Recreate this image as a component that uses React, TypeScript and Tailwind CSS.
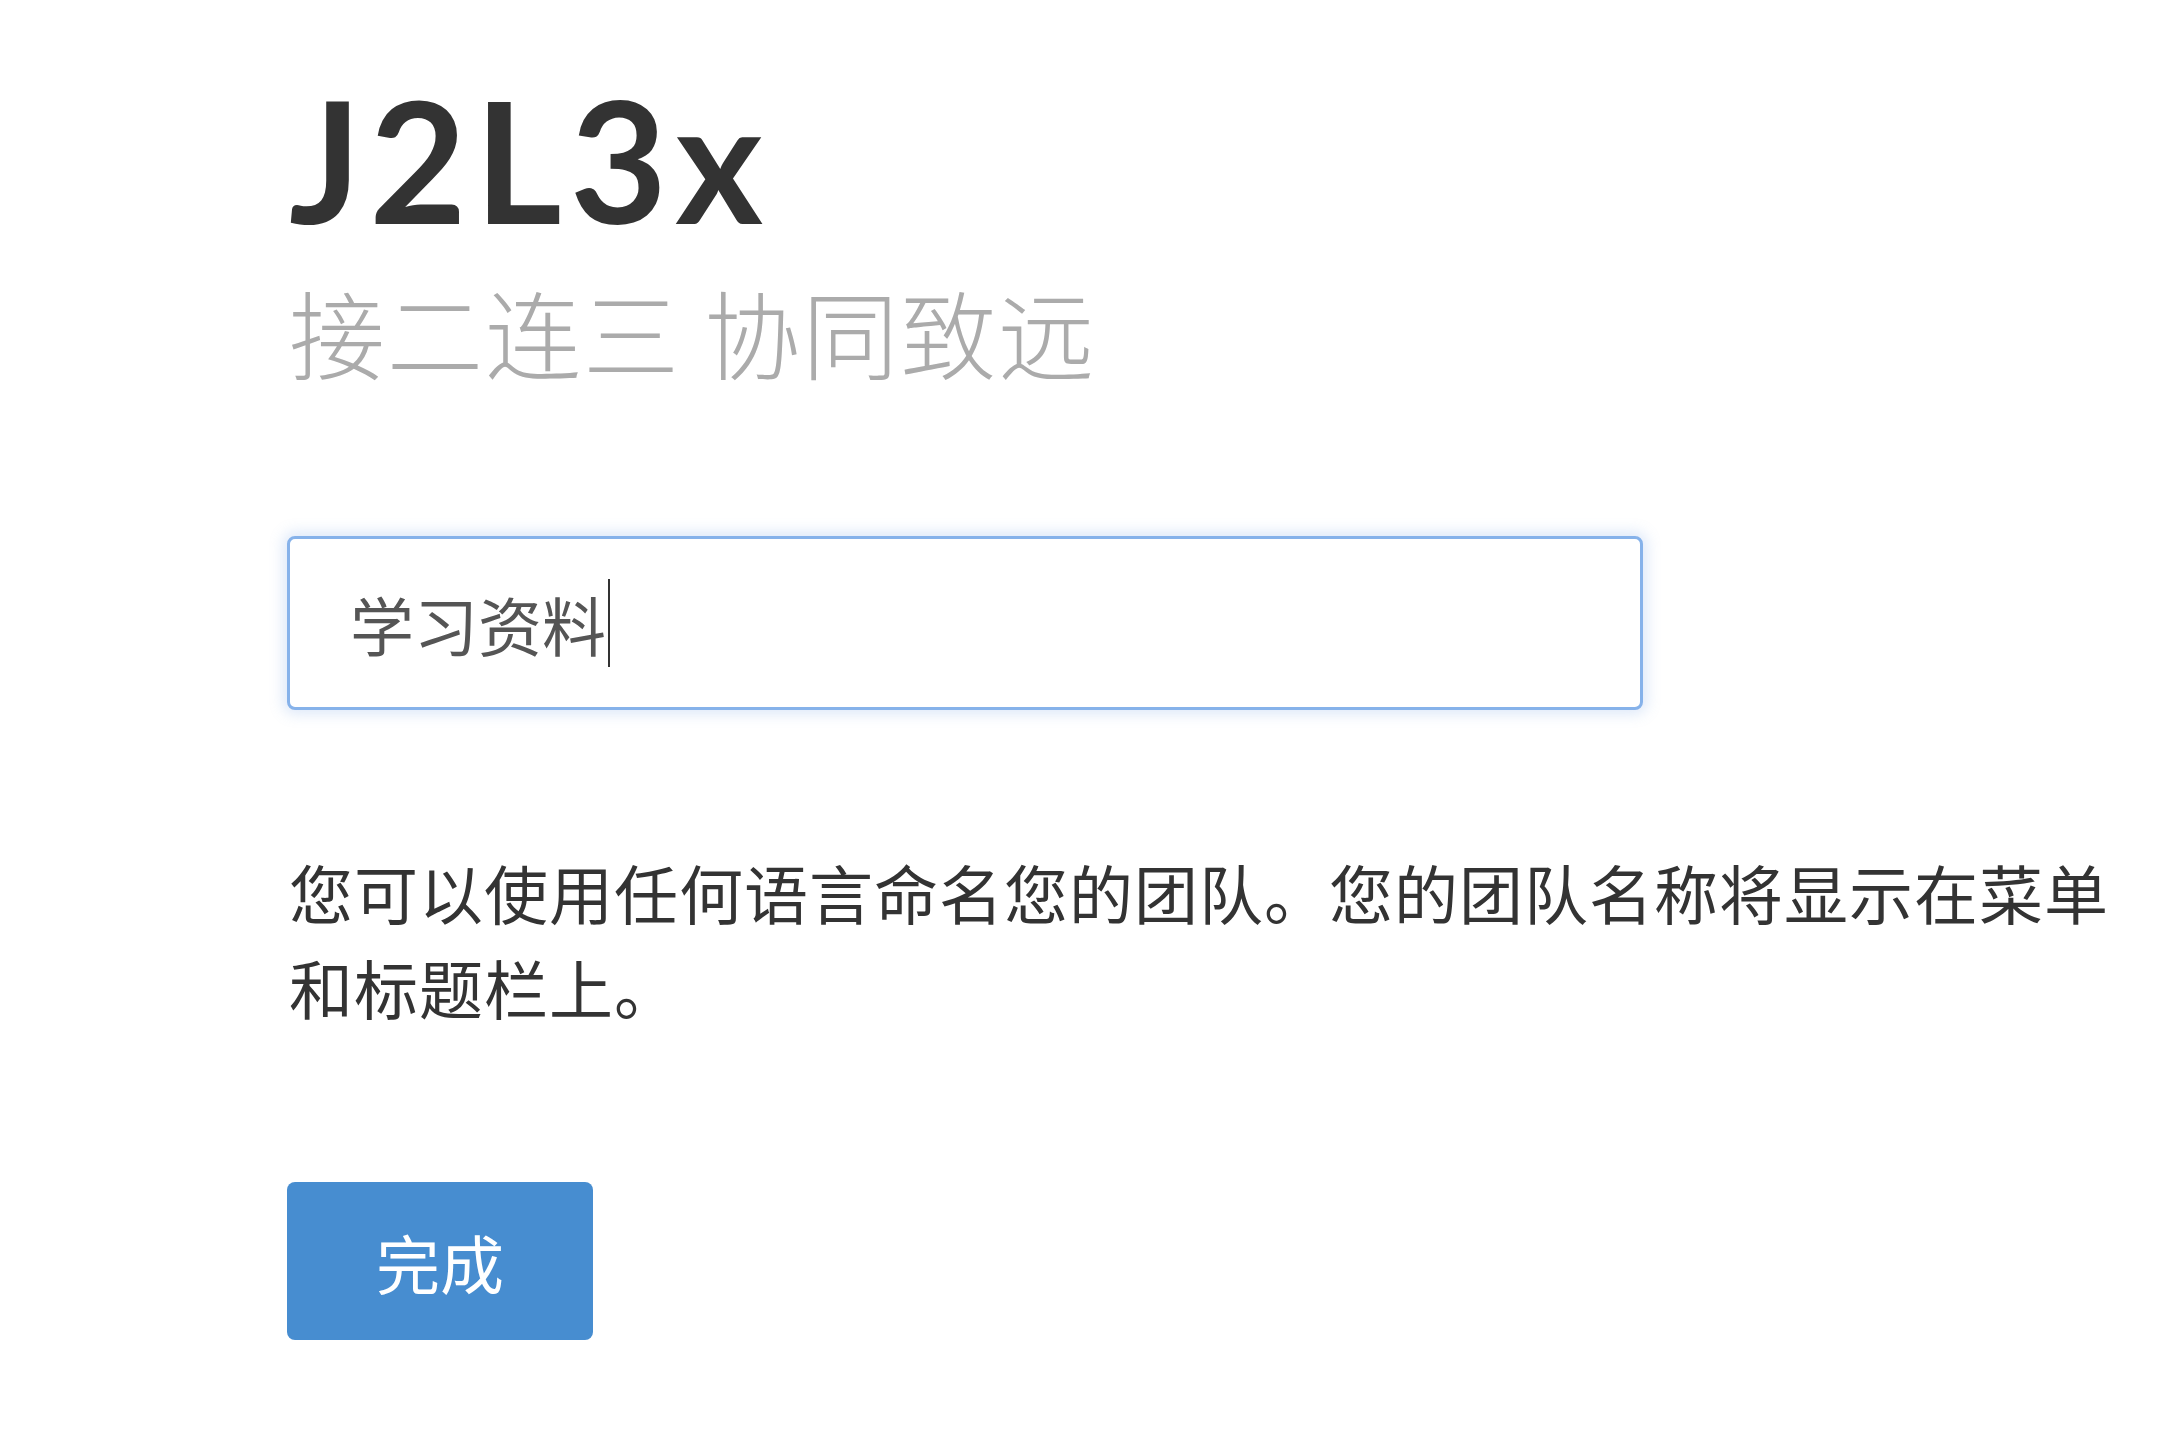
export default function App() {
  return (
    <div className="min-h-screen bg-white">
      <div className="flex flex-col pl-[287px] pr-[20px] w-[2161px]">
        {/* brand */}
        <h1 className="mt-[75px] ml-[2px] text-[168px] leading-none font-bold text-[#333333] tracking-[8px] [font-family:Lato,'Open_Sans',sans-serif]">
          J2L3x
        </h1>
        <p className="mt-[40px] ml-[2px] text-[96px] leading-none font-light text-[#ababab] tracking-[2px] [font-family:'Noto_Sans_CJK_SC',sans-serif]">
          接二连三 协同致远
        </p>

        {/* team name field */}
        <div className="mt-[157px] w-[1356px] h-[174px] flex items-center pl-[60px] rounded-[8px] border-[3px] border-[#86b2ea] bg-white shadow-[0_0_14px_4px_rgba(120,165,230,0.25)]">
          <span className="text-[64px] leading-none text-[#555555] [font-family:'Noto_Sans_CJK_SC',sans-serif]">
            学习资料
          </span>
          <span className="ml-[2px] w-[2px] h-[88px] bg-[#333333]" />
        </div>

        <p className="mt-[134px] ml-[2px] w-[1860px] text-[64px] leading-[95px] tracking-[1px] text-[#333333] [font-family:'Noto_Sans_CJK_SC',sans-serif]">
          您可以使用任何语言命名您的团队。您的团队名称将显示在菜单和标题栏上。
        </p>

        <button className="mt-[148px] w-[306px] h-[158px] rounded-[8px] bg-[#478dd0] text-white text-[64px] leading-none [font-family:'Noto_Sans_CJK_SC',sans-serif]">
          完成
        </button>
      </div>
    </div>
  );
}
